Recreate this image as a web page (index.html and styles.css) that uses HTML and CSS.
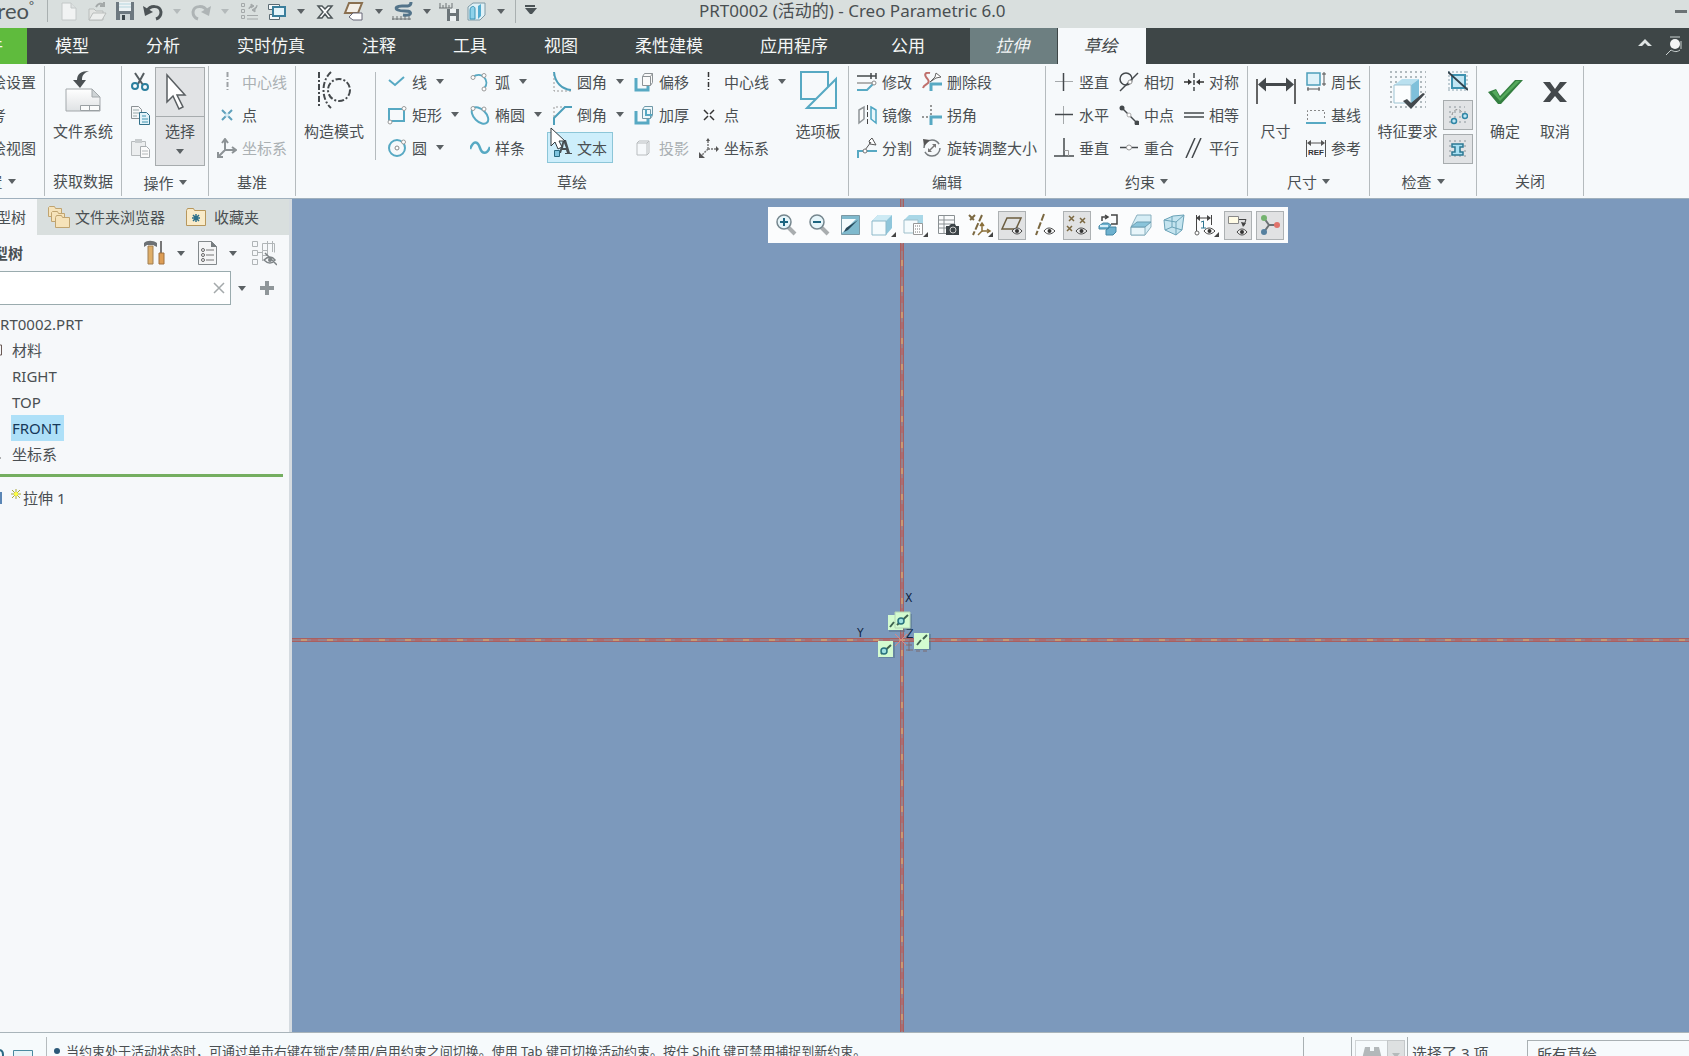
FILE: index.html
```html
<!DOCTYPE html>
<html lang="zh-CN">
<head>
<meta charset="utf-8">
<title>PRT0002 (活动的) - Creo Parametric 6.0</title>
<link rel="stylesheet" href="styles.css">
</head>
<body>
<div class="app">

<header class="titlebar">
  <div class="logo"><span>creo</span><sup>°</sup></div>
  <div class="quick">
    <button class="qi" aria-label="新建"><svg width="20" height="20" viewBox="0 0 20 20"><path d="M3 2h9l5 5v12H3z" fill="#f1f3f3" stroke="#c3c8c8"/><path d="M12 2v5h5" fill="#dde1e1" stroke="#c3c8c8"/></svg></button>
    <button class="qi" aria-label="打开"><svg width="20" height="20" viewBox="0 0 20 20"><path d="M2 8h5l2 2h7v9H2z" fill="#e2e4e2" stroke="#b9bdbc"/><path d="M2 19l4-7h13l-4 7z" fill="#eceeed" stroke="#b9bdbc"/><path d="M9 6c2-4 5-4 8-2M17 1v4h-4" fill="none" stroke="#a4a9a9" stroke-width="2"/></svg></button>
    <button class="qi" aria-label="保存"><svg width="20" height="20" viewBox="0 0 20 20"><path d="M1 1h18v18H1z" fill="#6d7880"/><path d="M4 1h12v9H4z" fill="#eef3f5"/><path d="M4 3h12M4 6h12" stroke="#b5d5de"/><path d="M5 13h10v6H5z" fill="#cdd4d6"/><path d="M7 14h3v5H7z" fill="#3c464b"/></svg></button>
    <button class="qi wide" aria-label="撤消"><svg width="20" height="20" viewBox="0 0 20 20"><path d="M4 10c3-6 13-6 14 1 0 3-2 6-5 7" fill="none" stroke="#4c5356" stroke-width="3"/><path d="M0 5l2 10 8-4z" fill="#4c5356"/></svg><i class="caret dim"></i></button>
    <button class="qi wide" aria-label="重做"><svg width="20" height="20" viewBox="0 0 20 20"><path d="M16 10C13 4 3 4 2 11c0 3 2 6 5 7" fill="none" stroke="#aeb4b5" stroke-width="3"/><path d="M20 5l-2 10-8-4z" fill="#aeb4b5"/></svg><i class="caret dim"></i></button>
    <button class="qi" aria-label="重新生成"><svg width="20" height="20" viewBox="0 0 20 20"><g fill="none" stroke="#a4a9aa"><path d="M2.500 2.500h3v3h-3zM2.500 8.500h3v3h-3zM2.500 14.500h3v3h-3z"/><path d="M8 14.500h11M8 18h11"/></g><path d="M10 8c0-2 1-3 4-3M12 3l3 2-3 2zM18 4c0 3-1 4-4 5M16 7l-3 2 3 2z" fill="#a4a9aa" stroke="#a4a9aa"/></svg></button>
    <button class="qi wide" aria-label="窗口"><svg width="20" height="20" viewBox="0 0 20 20"><path d="M1.500 3.500h11v5h-11z" fill="#f5f8f9" stroke="#5a6a72"/><path d="M2.500 13.500h10v5h-10z" fill="#f5f8f9" stroke="#5a6a72"/><path d="M6 6h12v9H6z" fill="#e4f4fa" stroke="#3b7f9c" stroke-width="2"/></svg><i class="caret"></i></button>
    <button class="qi" aria-label="关闭窗口"><svg width="20" height="20" viewBox="0 0 20 20"><path d="M3 5h4l3 3 3-3h4l-5 6 5 6h-4l-3-4-3 4H3l5-6z" fill="#fff" stroke="#4e5759" stroke-width="1.500"/></svg></button>
    <button class="qi wide" aria-label="基准平面"><svg width="22" height="20" viewBox="0 0 22 20"><path d="M6 2h13l-4 10H2z" fill="#f3efe8" stroke="#8a7050" stroke-width="2"/><path d="M10 12h9v7h-9l-4-3z" fill="#fff" stroke="#667"/></svg><i class="caret"></i></button>
    <button class="qi wide" aria-label="草绘"><svg width="22" height="20" viewBox="0 0 22 20"><path d="M20 1c0 5-4 4-9 4s-8 2-4 4 10 0 12 2-2 4-7 3" fill="none" stroke="#53748a" stroke-width="3"/><path d="M1 18h19M2 15v4M6 15v4M10 15v4M14 15v4M18 15v4" stroke="#6c7375"/></svg><i class="caret"></i></button>
    <button class="qi" aria-label="测量"><svg width="20" height="20" viewBox="0 0 20 20"><path d="M0 7h13M1 2v5M4 4v3M7 2v5M10 4v3M13 2v5" stroke="#6c7375"/><path d="M8 8h12v12H8z" fill="#6b7478"/><path d="M11 8h6v4h-6zM11 15h6v5h-6z" fill="#eef2f3"/></svg></button>
    <button class="qi wide" aria-label="截面"><svg width="20" height="20" viewBox="0 0 20 20"><path d="M1 6l5-4h12v12l-5 5H1z" fill="#dff1f7" stroke="#7f9aa6"/><path d="M3 18V9c0-4 5-5 5-1v10z" fill="#8ed2ea" stroke="#3b93b5"/><path d="M11 5l3-2v12l-3 3z" fill="#52acd0"/></svg><i class="caret"></i></button>
    <span class="vr"></span>
    <button class="qi bar" aria-label="自定义快速访问工具栏"><i class="caret big"></i></button>
  </div>
  <h1 class="title">PRT0002 (活动的) - Creo Parametric 6.0</h1>
  <button class="min" aria-label="最小化"></button>
</header>

<nav class="tabs">
  <button class="file"><span>文件</span></button>
  <button class="tab">模型</button><button class="tab">分析</button><button class="tab">实时仿真</button><button class="tab">注释</button><button class="tab">工具</button><button class="tab">视图</button><button class="tab">柔性建模</button><button class="tab">应用程序</button><button class="tab last">公用</button>
  <button class="ctx">拉伸</button><button class="ctx on">草绘</button>
  <div class="tabtools">
    <button aria-label="折叠功能区"><svg width="16" height="16" viewBox="0 0 16 16"><path d="M1 8l7-7 7 7h-4L8 5 5 8z" fill="#dfe4e4"/></svg></button>
    <button aria-label="搜索"><svg width="18" height="20" viewBox="0 0 18 20"><circle cx="10" cy="8" r="5" fill="#f3f5f5"/><path d="M5 1h10M16 5v8M15 14c-4 3-7 1-9 0l-5 5" fill="none" stroke="#c9d0d0"/></svg></button>
  </div>
</nav>

<section class="ribbon">
  <div class="group g-set">
    <div class="body"><div class="col cut">
      <button class="cmd">草绘设置</button><button class="cmd">参考</button><button class="cmd">草绘视图</button></div></div>
    <div class="label">设置<i class="caret"></i></div>
  </div>

  <div class="group g-data">
    <div class="body">
      <button class="big"><svg width="40" height="46" viewBox="0 0 40 46"><defs><linearGradient id="gy" x2="0" y2="1"><stop stop-color="#fff"/><stop offset="1" stop-color="#dfe2e4"/></linearGradient></defs><path d="M3 22h26l8 8v14H3z" fill="url(#gy)" stroke="#a3a8ab"/><path d="M29 22v8h8z" fill="#cfd4d6" stroke="#a3a8ab"/><path d="M17.500 38.500h19v5h-19zM26.500 38.500v5" fill="#fafbfb" stroke="#9aa0a3"/><path d="M26 4c-8 0-12 3-12 9h-4l7 8 6-8h-4c0-5 2-7 7-9z" fill="#4b5154"/></svg><span>文件系统</span></button>
    </div>
    <div class="label">获取数据</div>
  </div>

  <div class="group g-ops">
    <div class="body">
      <div class="col icons">
        <button class="cmd" aria-label="剪切"><svg width="20" height="20" viewBox="0 0 20 20"><path d="M5 1l8 12M14 1L8 12" stroke="#555d61" stroke-width="2" fill="none"/><ellipse cx="5" cy="14" rx="3" ry="3" fill="none" stroke="#2b7f9e" stroke-width="2"/><ellipse cx="15" cy="15" rx="3" ry="3" fill="none" stroke="#2b7f9e" stroke-width="2"/></svg></button>
        <button class="cmd" aria-label="复制"><svg width="20" height="20" viewBox="0 0 20 20"><path d="M1.500 1.500h7l3 3v9h-10z" fill="#f6f7f8" stroke="#8b9194"/><path d="M3 5h6M3 8h6M3 11h4" stroke="#9aa"/><path d="M9.500 7.500h7l3 3v9h-10z" fill="#e3f3f9" stroke="#33718a"/><path d="M12 11h4M12 14h6M12 17h6" stroke="#3f93b0"/></svg></button>
        <button class="cmd" aria-label="粘贴"><svg width="20" height="20" viewBox="0 0 20 20"><path d="M1.500 3.500h14v14h-14z" fill="#eceeef" stroke="#b7bbbd"/><path d="M5 1h7v4H5z" fill="#c8ccce"/><path d="M10.500 8.500h6l3 3v8h-9z" fill="#fbfbfb" stroke="#a8adb0"/><path d="M12 13h6M12 16h6" stroke="#b3b8ba"/></svg></button>
      </div>
      <button class="select"><span class="pick"><svg width="24" height="38" viewBox="0 0 24 38"><path d="M3 2v27l6-6 6 13 4-2-6-12h8z" fill="#fff" stroke="#5a5f62" stroke-width="1.500"/></svg></span><span class="pickname">选择</span><i class="caret"></i></button>
    </div>
    <div class="label">操作<i class="caret"></i></div>
  </div>

  <div class="group g-datum">
    <div class="body"><div class="col">
      <button class="cmd off"><svg width="20" height="20" viewBox="0 0 20 20"><path d="M10.500 0v20" stroke="#9da2a5" stroke-width="2" stroke-dasharray="5 2 1 2"/></svg>中心线</button>
      <button class="cmd"><svg width="20" height="20" viewBox="0 0 20 20"><path d="M5 5l10 10M15 5L5 15" stroke="#5fa0bb" stroke-width="2"/><circle cx="10" cy="10" r="2" fill="#d6ecf5"/></svg>点</button>
      <button class="cmd off"><svg width="20" height="20" viewBox="0 0 20 20"><path d="M8 12V2M8 12h10M8 12l-6 6M5 5l3-4 3 4M15 9l4 3-4 3M1 14v5h5" fill="none" stroke="#8d9396" stroke-width="2"/></svg>坐标系</button>
    </div></div>
    <div class="label">基准</div>
  </div>

  <div class="group g-sketch">
    <div class="body">
      <button class="big"><svg width="40" height="46" viewBox="0 0 40 46"><g fill="none" stroke="#44494c" stroke-width="2" stroke-dasharray="6 2 2 2"><path d="M5 5v36"/><path d="M17 5c-10 9-10 27 0 36"/><circle cx="25" cy="23" r="11"/></g></svg><span>构造模式</span></button>
      <span class="inner"></span>
      <div class="col c83">
        <button class="cmd"><svg width="20" height="20" viewBox="0 0 20 20"><path d="M2 8l6 5 9-8" fill="none" stroke="#57a9c3" stroke-width="2"/></svg>线<i class="caret"></i></button>
        <button class="cmd"><svg width="20" height="20" viewBox="0 0 20 20"><path d="M2 4h15v12H2z" fill="none" stroke="#57a9c3" stroke-width="2"/><circle cx="17" cy="3.500" r="2" fill="#fff" stroke="#999"/><circle cx="3" cy="17" r="2" fill="#fff" stroke="#999"/></svg>矩形<i class="caret"></i></button>
        <button class="cmd"><svg width="20" height="20" viewBox="0 0 20 20"><circle cx="10" cy="10" r="8" fill="none" stroke="#57a9c3" stroke-width="2"/><circle cx="10" cy="10" r="2" fill="#fff" stroke="#888"/><circle cx="16.500" cy="4" r="2" fill="#fff" stroke="#999"/></svg>圆<i class="caret"></i></button>
      </div>
      <div class="col c82">
        <button class="cmd"><svg width="20" height="20" viewBox="0 0 20 20"><path d="M3 5c8-6 18 3 11 12" fill="none" stroke="#57a9c3" stroke-width="2"/><circle cx="3" cy="5.500" r="2" fill="#fff" stroke="#999"/><circle cx="14" cy="3.500" r="2" fill="#fff" stroke="#999"/><circle cx="14" cy="17" r="2" fill="#fff" stroke="#999"/></svg>弧<i class="caret"></i></button>
        <button class="cmd"><svg width="20" height="20" viewBox="0 0 20 20"><ellipse cx="10" cy="10.500" rx="10" ry="6" transform="rotate(45 10 10.500)" fill="none" stroke="#57a9c3" stroke-width="2"/><circle cx="3" cy="3.500" r="2" fill="#fff" stroke="#999"/><circle cx="14" cy="4" r="2" fill="#fff" stroke="#999"/></svg>椭圆<i class="caret"></i></button>
        <button class="cmd"><svg width="20" height="20" viewBox="0 0 20 20"><path d="M0 11C4 1 8 4 10 10s7 7 10-1" fill="none" stroke="#57a9c3" stroke-width="2.500"/></svg>样条</button>
      </div>
      <div class="col c82">
        <button class="cmd"><svg width="20" height="20" viewBox="0 0 20 20"><path d="M2 2v17h17" fill="none" stroke="#999" stroke-dasharray="2 2"/><path d="M2 0c1 11 8 17 17 18" fill="none" stroke="#4d9fba" stroke-width="2"/></svg>圆角<i class="caret"></i></button>
        <button class="cmd"><svg width="20" height="20" viewBox="0 0 20 20"><path d="M2 12V2h12" fill="none" stroke="#999" stroke-dasharray="2 2"/><path d="M2 20v-7L13 2h7" fill="none" stroke="#4d9fba" stroke-width="2"/></svg>倒角<i class="caret"></i></button>
        <button class="cmd hot"><svg width="20" height="20" viewBox="0 0 20 20"><path d="M11 2h3l4 13h2v1h-7v-1h2l-1-3h-4l-1 3H7zM11 10h3l-2-5z" fill="#4a5054"/><path d="M2.500 12.500h5v6h-5z" fill="#7ec4df" stroke="#27697f"/></svg>文本<svg class="pointer" width="16" height="24" viewBox="0 0 16 24"><path d="M1 1v18l4-4 3 7 4-2-3-6h6z" fill="#fff" stroke="#333a3f"/></svg></button>
      </div>
      <div class="col c65">
        <button class="cmd"><svg width="20" height="20" viewBox="0 0 20 20"><path d="M2 6v12h12v-4" fill="none" stroke="#57a9c3" stroke-width="3"/><path d="M8.500 4.500h8v9h-8zM8.500 4.500l2-3h8v9l-2 3M16.500 4.500l2-3" fill="#fafafa" stroke="#8d9396"/></svg>偏移</button>
        <button class="cmd"><svg width="20" height="20" viewBox="0 0 20 20"><path d="M2 6v12h12v-4" fill="none" stroke="#57a9c3" stroke-width="3"/><path d="M8.500 4.500h8v9h-8zM8.500 4.500l2-3h8v9l-2 3" fill="#eef8fb" stroke="#6f99a8"/><path d="M12 4v6h6" fill="none" stroke="#57a9c3" stroke-width="2"/></svg>加厚</button>
        <button class="cmd off"><svg width="20" height="20" viewBox="0 0 20 20"><path d="M3 5h10v12H3zM3 5l2-2h10v12l-2 2M13 5l2-2" fill="none" stroke="#b9bdbf"/></svg>投影</button>
      </div>
      <div class="col c92">
        <button class="cmd"><svg width="20" height="20" viewBox="0 0 20 20"><path d="M9.500 0v20" stroke="#333" stroke-width="1.500" stroke-dasharray="5 2 1 2"/></svg>中心线<i class="caret"></i></button>
        <button class="cmd"><svg width="20" height="20" viewBox="0 0 20 20"><path d="M5 5l4 4M15 5l-4 4M5 15l4-4M15 15l-4-4" stroke="#333" stroke-width="1.500"/></svg>点</button>
        <button class="cmd"><svg width="20" height="20" viewBox="0 0 20 20"><path d="M9 11V3M9 11h8M9 11l-6 6" fill="none" stroke="#777" stroke-width="1.500" stroke-dasharray="2 1"/><path d="M7 3l2-3 2 3zM17 8l3 3-3 3zM0 14v6h6z" fill="#555"/></svg>坐标系</button>
      </div>
      <button class="big palette"><svg width="40" height="46" viewBox="0 0 40 46"><path d="M3 5h27v27H3z" fill="none" stroke="#57a9c3" stroke-width="2"/><path d="M9 41L38 12v29z" fill="#f8fafb" stroke="#57a9c3" stroke-width="2"/></svg><span>选项板</span></button>
    </div>
    <div class="label">草绘</div>
  </div>

  <div class="group g-edit">
    <div class="body">
      <div class="col c65">
        <button class="cmd"><svg width="20" height="20" viewBox="0 0 20 20"><path d="M0 4h19M14 1v6M19 1v6" stroke="#44494c" stroke-width="1.500"/><path d="M0 11h17" stroke="#999" stroke-width="1.500"/><path d="M0 18h10l6-6" fill="none" stroke="#57a9c3" stroke-width="2"/><circle cx="17" cy="11" r="2" fill="#fff" stroke="#888"/></svg>修改</button>
        <button class="cmd"><svg width="20" height="20" viewBox="0 0 20 20"><path d="M2 5l5-3v12l-5 4z" fill="#fafafa" stroke="#8d9396" stroke-width="1.500"/><path d="M10.500 0v20" stroke="#444" stroke-dasharray="5 2"/><path d="M14 2l5 3v13l-5-4z" fill="#e8f6fb" stroke="#4da5c2" stroke-width="1.500"/></svg>镜像</button>
        <button class="cmd"><svg width="20" height="20" viewBox="0 0 20 20"><path d="M1 20v-7h19" fill="none" stroke="#57a9c3" stroke-width="2"/><path d="M8 12l6-8M12 3l3-3 4 7-6-1z" fill="#fff" stroke="#555"/><circle cx="8" cy="13" r="2" fill="#fff" stroke="#777"/></svg>分割</button>
      </div>
      <div class="col">
        <button class="cmd"><svg width="20" height="20" viewBox="0 0 20 20"><path d="M8 1C4 0 2 2 4 5s4 4 2 6-4 2-5 5" fill="none" stroke="#c0706c" stroke-width="2"/><path d="M9 19v-7h11" fill="none" stroke="#57a9c3" stroke-width="3"/><path d="M8 10l5-5 1-4 5 4-5 1z" fill="#fff" stroke="#666"/></svg>删除段</button>
        <button class="cmd"><svg width="20" height="20" viewBox="0 0 20 20"><path d="M9 0v10M0 12h9" stroke="#777" stroke-width="1.500" stroke-dasharray="2 2"/><path d="M9 20v-8h11" fill="none" stroke="#57a9c3" stroke-width="3"/></svg>拐角</button>
        <button class="cmd"><svg width="20" height="20" viewBox="0 0 20 20"><circle cx="10" cy="10" r="8" fill="none" stroke="#777c7f" stroke-width="1.500" stroke-dasharray="21 4"/><path d="M7 13l6-6" stroke="#777" stroke-width="1.500"/><path d="M10 6h4v4zM6 10v4h4z" fill="#777"/><path d="M1 1l7 1-6 6z" fill="#555"/></svg>旋转调整大小</button>
      </div>
    </div>
    <div class="label">编辑</div>
  </div>

  <div class="group g-con">
    <div class="body">
      <div class="col c65">
        <button class="cmd"><svg width="20" height="20" viewBox="0 0 20 20"><path d="M1 9.500h18" stroke="#a5a9ab"/><path d="M9.500 1v18" stroke="#44494c" stroke-width="1.500"/></svg>竖直</button>
        <button class="cmd"><svg width="20" height="20" viewBox="0 0 20 20"><path d="M9.500 1v18" stroke="#a5a9ab"/><path d="M1 9.500h18" stroke="#44494c" stroke-width="1.500"/></svg>水平</button>
        <button class="cmd"><svg width="20" height="20" viewBox="0 0 20 20"><path d="M10 0v18M0 18h20" stroke="#44494c" stroke-width="1.500"/><path d="M10 12.500h4.500V18" fill="none" stroke="#999"/></svg>垂直</button>
      </div>
      <div class="col c65">
        <button class="cmd"><svg width="20" height="20" viewBox="0 0 20 20"><circle cx="7" cy="7" r="6" fill="none" stroke="#44494c" stroke-width="1.500"/><path d="M1 19L19 1" stroke="#44494c" stroke-width="1.500"/><circle cx="11" cy="10" r="2" fill="#fff" stroke="#999"/></svg>相切</button>
        <button class="cmd"><svg width="20" height="20" viewBox="0 0 20 20"><path d="M2 2l16 16" stroke="#44494c" stroke-width="1.500"/><circle cx="3" cy="3" r="2.500" fill="#44494c"/><circle cx="18" cy="18" r="2.500" fill="#44494c"/><circle cx="10" cy="10" r="2" fill="#fff" stroke="#aaa"/></svg>中点</button>
        <button class="cmd"><svg width="20" height="20" viewBox="0 0 20 20"><path d="M1 9.500h18" stroke="#44494c" stroke-width="1.500"/><circle cx="10" cy="9.500" r="2.500" fill="#fff" stroke="#999"/></svg>重合</button>
      </div>
      <div class="col">
        <button class="cmd"><svg width="20" height="20" viewBox="0 0 20 20"><path d="M10 1v18" stroke="#44494c" stroke-width="1.500" stroke-dasharray="5 2"/><path d="M0 10h6M20 10h-6" stroke="#333" stroke-width="1.500"/><path d="M4 7l4 3-4 3zM16 7l-4 3 4 3z" fill="#333"/></svg>对称</button>
        <button class="cmd"><svg width="20" height="20" viewBox="0 0 20 20"><path d="M0 8h20M0 12h20" stroke="#44494c" stroke-width="1.500"/></svg>相等</button>
        <button class="cmd"><svg width="20" height="20" viewBox="0 0 20 20"><path d="M2 20L11 0M8 20L17 0" stroke="#44494c" stroke-width="1.500"/></svg>平行</button>
      </div>
    </div>
    <div class="label">约束<i class="caret"></i></div>
  </div>

  <div class="group g-dim">
    <div class="body">
      <button class="big"><svg width="40" height="46" viewBox="0 0 40 46"><path d="M1 12v25M39 12v25" stroke="#333" stroke-width="1.500"/><path d="M6 17.500h28" stroke="#44494c" stroke-width="3"/><path d="M2 17.500l8-7v14zM38 17.500l-8-7v14z" fill="#44494c"/></svg><span>尺寸</span></button>
      <div class="col">
        <button class="cmd"><svg width="20" height="20" viewBox="0 0 20 20"><path d="M1 1h13v12H1z" fill="#dff2f9" stroke="#4d9fba" stroke-width="1.500"/><path d="M18 0v14M16 2h4M16 12h4M1 17h13M2 15v4M13 15v4" stroke="#555"/></svg>周长</button>
        <button class="cmd"><svg width="20" height="20" viewBox="0 0 20 20"><path d="M1.500 15V5.500h17V15" fill="none" stroke="#888" stroke-dasharray="2 2"/><path d="M0 18h20" stroke="#57a9c3" stroke-width="2"/></svg>基线</button>
        <button class="cmd"><svg width="20" height="20" viewBox="0 0 20 20"><path d="M.5 2v17M19.500 2v17M2 5h16" stroke="#555"/><path d="M1 5l4-3v6zM19 5l-4-3v6z" fill="#555"/><text x="2" y="17" font-size="8" font-weight="700" font-family="Liberation Sans, sans-serif" fill="#333">REF</text></svg>参考</button>
      </div>
    </div>
    <div class="label">尺寸<i class="caret"></i></div>
  </div>

  <div class="group g-check">
    <div class="body">
      <button class="big"><svg width="40" height="46" viewBox="0 0 40 46"><g stroke="#9aa5ab" stroke-width="1.500" stroke-dasharray="2 3"><path d="M2 5h36M2 10h36M2 15h36M2 20h36M2 25h36M2 30h36M2 35h36M2 40h36"/></g><path d="M6 18l8-6h17v18l-8 8H6z" fill="#fbfdfe"/><path d="M6 18l8-6h17l-8 6z" fill="#b9e0ef"/><path d="M23 18l8-6v18l-8 8z" fill="#7fc0da"/><path d="M6 18h17v18H6z" fill="#fbfdfe" stroke="#9dc3d2"/><path d="M15 34l4-2 4 4L35 26l2 1-14 15z" fill="#43494d"/></svg><span>特征要求</span></button>
      <div class="col toggles">
        <button class="tog" aria-label="着色封闭环"><svg width="20" height="20" viewBox="0 0 20 20"><path d="M0 1h20M0 19h20M1 0v20M19 0v20" stroke="#8aa2ad" stroke-dasharray="2 2"/><path d="M4 4h13v13H4z" fill="#c2e6f3" stroke="#3f93b0" stroke-width="2"/><path d="M0 1l20 18" stroke="#33434d" stroke-width="2"/></svg></button>
        <button class="tog down" aria-label="突出显示开放端"><svg width="20" height="20" viewBox="0 0 20 20"><path d="M1 2h16M1 7h18M1 12h18M1 17h18" stroke="#a8b0b4" stroke-width="1.500" stroke-dasharray="2 3"/><path d="M4 10c1-6 8-8 11-1" fill="none" stroke="#888" stroke-dasharray="3 2"/><circle cx="6" cy="16" r="2.500" fill="#bfe6f5" stroke="#2f86a6" stroke-width="1.500"/><circle cx="17" cy="11" r="2.500" fill="#bfe6f5" stroke="#2f86a6" stroke-width="1.500"/></svg></button>
        <button class="tog down" aria-label="重叠几何"><svg width="20" height="20" viewBox="0 0 20 20"><path d="M1 2h18M1 7h18M1 12h18M1 17h18" stroke="#a8b0b4" stroke-width="1.500" stroke-dasharray="2 3"/><path d="M4 5h11v3h-3v5h3v3H4v-3h3V8H4z" fill="#a8e0f3" stroke="#2b7893" stroke-width="1.500"/></svg></button>
      </div>
    </div>
    <div class="label">检查<i class="caret"></i></div>
  </div>

  <div class="group g-close">
    <div class="body">
      <button class="big"><svg width="40" height="46" viewBox="0 0 40 46"><path d="M3 25l8-3 4 7L30 13h8L16 37h-3z" fill="#347f40"/><path d="M7 25l4-2 4 8L31 14h4L15 34z" fill="#55a95c"/></svg><span>确定</span></button>
      <button class="big"><svg width="40" height="46" viewBox="0 0 40 46"><path d="M8 15h7l5 7 5-7h7l-9 10 9 10h-7l-5-6-5 6H8l8-10z" fill="#44494c"/></svg><span>取消</span></button>
    </div>
    <div class="label">关闭</div>
  </div>
</section>

<main class="main">
  <aside class="side">
    <div class="sidetabs">
      <button class="st on"><span>模型树</span></button>
      <button class="st folders"><svg width="24" height="24" viewBox="0 0 24 24"><g fill="#f6e3ba" stroke="#c0a470"><path d="M1.500 2.500l1-1h5l1 2h6v8h-13z"/><path d="M4.500 7.500l1-1h5l1 2h6v8h-13z"/><path d="M8.500 12.500l1-2h5l1 2h7v10h-14z"/></g></svg>文件夹浏览器</button>
      <button class="st fav"><svg width="22" height="22" viewBox="0 0 22 22"><path d="M1.500 4.500l1-2h6l1 2h11v15h-19z" fill="#f9ebc9" stroke="#b7975c"/><path d="M11 8v8M7 12h8M8 9l6 6M14 9l-6 6" stroke="#2b6f8a" stroke-width="1.500"/></svg>收藏夹</button>
    </div>
    <div class="treehead">
      <h2>模型树</h2>
      <button class="th" aria-label="设置"><svg width="24" height="26" viewBox="0 0 24 26"><path d="M1 7V3c3-3 9-3 13 0v4l-4-2H4z" fill="#6d7175"/><path d="M5 6h5v18H5z" fill="#dfae68" stroke="#a07f52"/><path d="M18 1v12" stroke="#777" stroke-width="2"/><path d="M16 13h5v11h-5z" fill="#dd9d55" stroke="#a0703f"/></svg><i class="caret"></i></button>
      <button class="th" aria-label="显示"><svg width="22" height="26" viewBox="0 0 22 26"><path d="M1.500 1.500h13l5 5v18h-18z" fill="#f4f5f6" stroke="#83898c"/><path d="M14 1v6h6z" fill="#777d80"/><path d="M9 10h8M9 15h8M9 20h8" stroke="#777"/><circle cx="6" cy="10" r="1.500" fill="none" stroke="#666"/><circle cx="6" cy="15" r="1.500" fill="none" stroke="#666"/><circle cx="6" cy="20" r="1.500" fill="none" stroke="#666"/></svg><i class="caret"></i></button>
      <button class="th" aria-label="隐藏的项"><svg width="28" height="26" viewBox="0 0 28 26"><g fill="none" stroke="#b0b5b7"><path d="M3.500 1.500h5v5h-5zM3.500 10.500h5v5h-5zM3.500 19.500h5v5h-5zM13.500 10.500h5v5h-5zM8 12.500h5M18.500 12V1M23.500 12V1M13.500 10V3.500h12v9M13.500 15v6"/></g><path d="M15 20c4-4 8-4 11 0-3 4-7 4-11 0zM16 13l12 12" fill="none" stroke="#7d8386" stroke-width="1.500"/><circle cx="21" cy="20" r="2" fill="#7d8386"/></svg></button>
    </div>
    <div class="find">
      <label><input type="text" aria-label="查找"><button aria-label="清除"><svg width="12" height="12" viewBox="0 0 12 12"><path d="M1 1l10 10M11 1L1 11" stroke="#a4a9ab" stroke-width="1.500"/></svg></button></label>
      <button aria-label="过滤选项"><i class="caret"></i></button>
      <button aria-label="添加"><svg width="14" height="14" viewBox="0 0 14 14"><path d="M7 0v14M0 7h14" stroke="#8f9699" stroke-width="4"/></svg></button>
    </div>
    <ul class="tree">
      <li class="root"><span>PRT0002.PRT</span></li>
      <li><svg width="2" height="12"><path d="M0 1h1.500v10H0" fill="none" stroke="#6b5a55"/></svg><span>材料</span></li>
      <li><span>RIGHT</span></li>
      <li><span>TOP</span></li>
      <li class="sel"><span>FRONT</span></li>
      <li><svg width="2" height="12"><path d="M0 10h1" stroke="#666"/></svg><span>坐标系</span></li>
    </ul>
    <hr class="insert">
    <ul class="tree"><li class="feat"><svg width="2" height="12"><path d="M1 0v12" stroke="#5b86b5" stroke-width="2"/></svg><svg class="spark" width="10" height="12" viewBox="0 0 10 12"><path d="M5 1v10M0 6h10M1 2l8 8M9 2l-8 8" stroke="#a9a83c"/><circle cx="5" cy="6" r="2" fill="#ffff3c"/></svg><span>拉伸 1</span></li></ul>
  </aside>

  <section class="canvas">
    <div class="axis v"></div>
    <div class="axis h"></div>
    <svg class="origin" width="100" height="100" viewBox="0 0 100 100">
      <g font-family="DejaVu Sans Condensed, DejaVu Sans, sans-serif" font-size="12" fill="#10233f"><text x="53" y="12">X</text><text x="5" y="47">Y</text><text x="54" y="48">Z</text></g>
      <path d="M43 44l12 12M55 44L43 56" stroke="#e0857e"/>
      <path d="M54 55h6M57 52v9M54 60h7M64 58h4M71 58h3M64 61h4M71 61h4" stroke="#7d6b6e"/>
      <path d="M37 26h16v16H37zM63 44h16v16H63zM27 52h16v16H27zM44 24h16v16H44z" fill="#4f6f86" opacity=".5"/>
      <path d="M36 25h15v15H36zM62 43h15v16H62zM26 51h15v16H26z" fill="#d3fbd0"/>
      <path d="M43 22h15v16H43z" fill="#d3fbd0" stroke="#b4d6b4"/>
      <path d="M38 37l4-5M65 55l4-5M71 49l4-4M29 64l10-9M45 35l11-10" stroke="#3f6350" stroke-width="2"/>
      <circle cx="49" cy="31" r="3" fill="#9fe0e0" stroke="#27707c" stroke-width="1.500"/><circle cx="32" cy="61" r="3" fill="#9fe0e0" stroke="#27707c" stroke-width="1.500"/>
    </svg>
    <div class="viewbar">
      <button aria-label="放大"><svg width="24" height="24" viewBox="0 0 24 24"><path d="M14 14l7 7" stroke="#a9adaf" stroke-width="4"/><circle cx="10" cy="9" r="7" fill="#e6f5fa" stroke="#75868e" stroke-width="1.500"/><path d="M10 5v8M6 9h8" stroke="#1d6580" stroke-width="2"/></svg></button>
      <button aria-label="缩小"><svg width="24" height="24" viewBox="0 0 24 24"><path d="M14 14l7 7" stroke="#a9adaf" stroke-width="4"/><circle cx="10" cy="9" r="7" fill="#e6f5fa" stroke="#75868e" stroke-width="1.500"/><path d="M6 9h8" stroke="#1d6580" stroke-width="2"/></svg></button>
      <button aria-label="重画"><svg width="24" height="24" viewBox="0 0 24 24"><path d="M2.500 2.500h18v19h-18z" fill="#7fb9cd" stroke="#7b98a4"/><path d="M3 6h14L3 20z" fill="#f4fbfd"/><path d="M19 7L9 17l-4 2 2-4z" fill="#27485a"/></svg></button>
      <button aria-label="显示样式"><svg width="26" height="24" viewBox="0 0 26 24"><path d="M2 8l6-6h14v13l-6 7H2z" fill="#8fc6db"/><path d="M2 8l6-6h14l-6 6z" fill="#cdeaf4"/><path d="M2 8h14v14H2z" fill="#f5fbfd" stroke="#8db9ca"/><path d="M26 19v5h-5z" fill="#444"/></svg></button>
      <button aria-label="已保存方向"><svg width="26" height="24" viewBox="0 0 26 24"><path d="M2 7l5-5h14v13l-5 5H2z" fill="#a9d7e7"/><path d="M2 7h14v13H2z" fill="#f5fbfd" stroke="#9fbfcb"/><path d="M11.500 10.500h9v11h-9z" fill="#fff" stroke="#999"/><path d="M13 13h6M13 16h6M13 19h6" stroke="#777" stroke-dasharray="1 1"/><path d="M26 19v5h-5z" fill="#444"/></svg></button>
      <button aria-label="视图管理器"><svg width="24" height="24" viewBox="0 0 24 24"><path d="M2.500 2.500h16v18h-16zM2 7h17M2 11h17M2 15h17M8 2v18" fill="none" stroke="#8a9093"/><path d="M10 13h3l2-2h4l1 2h3v9H10z" fill="#3d4448"/><circle cx="17" cy="17" r="3" fill="#3d4448" stroke="#ccc"/></svg></button>
      <button aria-label="基准显示过滤器"><svg width="26" height="24" viewBox="0 0 26 24"><path d="M2 2l6 6M8 2L2 8M15 2L6 22" stroke="#7b6841" stroke-width="2" fill="none" stroke-dasharray="7 2"/><path d="M15 18v-7M15 18h7M15 18l-4 4M13 13l2-3 2 3M20 16l3 2-3 2" stroke="#8a6f3a" fill="none" stroke-width="1.500"/><path d="M26 19v5h-5z" fill="#444"/></svg></button>
      <button class="down" aria-label="平面显示"><svg width="24" height="24" viewBox="0 0 24 24"><path d="M7 5h14l-5 11H2z" fill="none" stroke="#6c5d3f" stroke-width="1.500"/><path d="M12 18c3-4 7-4 10 0-3 4-7 4-10 0z" fill="#e8e8e8" stroke="#444"/><circle cx="17" cy="18" r="2" fill="#333"/></svg></button>
      <button aria-label="轴显示"><svg width="24" height="24" viewBox="0 0 24 24"><path d="M11 1L3 22" stroke="#7b6841" stroke-width="2" stroke-dasharray="7 2"/><path d="M11 18c3-4 7-4 11 0-4 4-8 4-11 0z" fill="#fff" stroke="#444"/><circle cx="16.500" cy="18" r="2" fill="#333"/></svg></button>
      <button class="down" aria-label="点显示"><svg width="24" height="24" viewBox="0 0 24 24"><path d="M4 3l5 5M9 3L4 8M15 5l5 5M20 5l-5 5M2 13l5 5M7 13l-5 5" stroke="#7b6841" stroke-width="1.500"/><path d="M11 18c3-4 7-4 11 0-4 4-8 4-11 0z" fill="#e8e8e8" stroke="#444"/><circle cx="16.500" cy="18" r="2" fill="#333"/></svg></button>
      <button aria-label="草绘视图"><svg width="24" height="24" viewBox="0 0 24 24"><path d="M5 8V4h5M8 2l3 2-3 2M14 2h6v9h-6" fill="none" stroke="#444" stroke-width="1.500"/><path d="M2 13l4-3h5l3 2-3 4H2zM9 17l3-3h7v5l-3 3H9z" fill="#6db1cf" stroke="#4688a5"/><path d="M3 13h8" stroke="#d6eef8" stroke-width="2"/></svg></button>
      <button aria-label="修剪模型"><svg width="24" height="24" viewBox="0 0 24 24"><path d="M2 14l6-12h14v12l-6 8H2z" fill="#d6edf5" stroke="#8ab0bf"/><path d="M2 14h14v8H2z" fill="#e8f5fa" stroke="#8ab0bf"/><path d="M2 14l6-5h14l-6 5z" fill="#8ac4da" stroke="#6a9db2"/></svg></button>
      <button aria-label="透视图"><svg width="24" height="24" viewBox="0 0 24 24"><path d="M2 7l9-4 11-1-2 15-6 5-11-5z" fill="#c4e4ef" stroke="#6ba3b8"/><path d="M2 7l12 2 8-7M14 9v13M10 3v11l10 3M10 14l-7 3" fill="none" stroke="#6ba3b8"/></svg></button>
      <button aria-label="尺寸显示"><svg width="26" height="24" viewBox="0 0 26 24"><path d="M3.500 2v16M18.500 2v10M4 5h13" stroke="#444" fill="none"/><path d="M10.500 8v7M8 15h5M8 9l3-1" stroke="#2d7590" fill="none"/><path d="M3 5l4-3v6zM18 5l-4-3v6z" fill="#444"/><circle cx="4" cy="20" r="2" fill="#fff" stroke="#666"/><path d="M11 18c3-4 7-4 11 0-4 4-8 4-11 0z" fill="#fff" stroke="#444"/><circle cx="16.500" cy="18" r="2" fill="#333"/><path d="M26 19v5h-5z" fill="#444"/></svg></button>
      <button class="down" aria-label="注释显示"><svg width="24" height="24" viewBox="0 0 24 24"><path d="M2.500 3.500h10v7h-10z" fill="#fffbe5" stroke="#888"/><path d="M13 6.500h7l-2 6" fill="none" stroke="#444"/><path d="M15 9l2 5 3-4z" fill="#444"/><path d="M11 19c3-4 7-4 10 0-3 4-7 4-10 0z" fill="#e8e8e8" stroke="#444"/><circle cx="16" cy="19" r="2" fill="#333"/></svg></button>
      <button class="down" aria-label="旋转中心"><svg width="24" height="24" viewBox="0 0 24 24"><path d="M6 5l5 7h9M11 12l-5 7" fill="none" stroke="#6b7174" stroke-width="2"/><circle cx="6" cy="5" r="3" fill="#74b36f"/><circle cx="19" cy="12" r="3" fill="#e0736b"/><circle cx="6" cy="19" r="3" fill="#55809f"/></svg></button>
    </div>
  </section>
</main>

<footer class="status">
  <button class="sb" aria-label="导航器"><svg width="36" height="20" viewBox="0 0 36 20"><path d="M0 3c4 1 4 8 0 11" fill="none" stroke="#2d6b86" stroke-width="2"/><path d="M13.500 3.500h19v15h-19z" fill="#e8f4f8" stroke="#4b8aa0"/></svg></button>
  <p class="msg">当约束处于活动状态时，可通过单击右键在锁定/禁用/启用约束之间切换。使用 Tab 键可切换活动约束。按住 Shift 键可禁用捕捉到新约束。</p>
  <span class="cell"></span>
  <div class="cell search"><button class="bino" aria-label="查找"><svg width="20" height="20" viewBox="0 0 20 20"><path d="M3 2h5v4h4V2h5l3 12v4h-8v-5H8v5H0v-4z" fill="#b3b8ba"/></svg></button><button class="binodrop" aria-label="查找选项"><i class="caret dim"></i></button></div>
  <output>选择了 3 项</output>
  <select aria-label="选择过滤器"><option>所有草绘</option></select>
</footer>
</div>
</body>
</html>
```
FILE: styles.css
```css
* { box-sizing: border-box; }
body {
  margin: 0;
  font: 15px/20px "Noto Sans", "Noto Sans CJK SC", sans-serif;
  color: #4a4f52;
  background: #f6f9fb;
  overflow: hidden;
}
button {
  font: inherit;
  color: inherit;
  background: none;
  border: 0;
  padding: 0;
  margin: 0;
  display: flex;
  align-items: center;
  white-space: nowrap;
}
svg { flex: none; display: block; }
h1, h2, p, ul { margin: 0; padding: 0; }

.app {
  height: 100vh;
  display: grid;
  grid-template-rows: 28px 36px 135px minmax(0, 1fr) 24px;
}
.caret {
  flex: none;
  border: 4px solid transparent;
  border-top: 5px solid #5b6164;
  border-bottom: 0;
}
.caret.dim { border-top-color: #b4babb; }

/* title bar */
.titlebar {
  display: flex;
  align-items: center;
  height: 28px;
  padding-bottom: 6px;
  background: #d9dfde;
}
.logo {
  width: 48px;
  height: 22px;
  display: flex;
  justify-content: flex-end;
  padding-right: 13px;
  overflow: hidden;
  border-right: 1px solid #a9b0b0;
  font: 22px/22px Lato, sans-serif;
  color: #4b5356;
  margin-right: 11px;
}
.logo sup { font-size: 12px; line-height: 12px; }
.quick { display: flex; align-items: center; }
.qi { width: 28px; gap: 10px; }
.qi.wide { width: 48px; }
.vr { width: 1px; height: 24px; background: #a9b0b0; margin-right: 9px; }
.qi.bar { width: 12px; }
.caret.big { border-width: 6px 5px 0; border-top-color: #4b5356; position: relative; }
.caret.big::before {
  content: "";
  position: absolute;
  left: -5px;
  top: -9px;
  width: 10px;
  border-top: 2px solid #4b5356;
}
.title {
  margin-left: 162px;
  font-size: 17px;
  font-weight: 400;
  white-space: nowrap;
}
.min { margin-left: auto; margin-right: 2px; width: 12px; height: 3px; background: #6b7274; }

/* ribbon tabs */
.tabs {
  display: flex;
  background: #3e4647;
  color: #f4f6f6;
  font-size: 17px;
}
.tabs > button { justify-content: center; }
.tabs .file {
  width: 27px;
  background: #5fbb3d;
  justify-content: flex-end;
  padding-right: 24px;
}
.tab { padding: 0 29px 0 28px; }
.tab.last { padding: 0 45px 0 34px; }
.tabs .ctx { width: 88px; padding-right: 3px; background: #6d7f81; font-style: italic; border-right: 1px solid #3e4647; }
.tabs .ctx.on { background: #f6f9fb; color: #3d4244; border: 0; }
.tabtools { margin-left: auto; display: flex; gap: 12px; padding-right: 6px; align-items: center; }

/* ribbon */
.ribbon {
  display: flex;
  background: #f6f9fb;
  border-bottom: 1px solid #9fb0bd;
  padding: 2px 0 2px;
}
.group {
  flex: none;
  border-right: 1px solid #b5bbbe;
  display: flex;
  flex-direction: column;
  overflow: hidden;
}
.body { display: flex; height: 100px; padding-top: 1px; }
.label {
  height: 30px;
  display: flex;
  align-items: center;
  justify-content: center;
  gap: 5px;
  margin-top: 3px;
}
.g-set { width: 45px; }
.g-set .label { width: 60px; margin-left: -36px; }
.g-data { width: 77px; }
.g-ops { width: 87px; }
.g-datum { width: 87px; }
.g-sketch { width: 553px; }
.g-edit { width: 197px; }
.g-con { width: 202px; }
.g-dim { width: 122px; }
.g-check { width: 107px; }
.g-close { width: 107px; }

.col { display: flex; flex-direction: column; margin-top: -2px; }
.col.cut { margin-left: -24px; }
.cmd { height: 33px; gap: 5px; position: relative; }
.cmd .caret { margin-left: 4px; }
.cmd.off { color: #aab0b3; }
.c83 { width: 83px; }
.c82 { width: 82px; }
.c65 { width: 65px; }
.c92 { width: 92px; }
.g-datum .body, .g-con .body, .g-edit .body { padding-left: 8px; }
.g-ops .body { padding-left: 8px; gap: 5px; }
.cmd.hot {
  height: 31px;
  width: 66px;
  margin: 1px 0 0 -5px;
  padding-left: 4px;
  background: #cdeefb;
  border: 1px solid #8cc6d8;
}
.pointer { position: absolute; left: 2px; top: -6px; }
.big {
  flex: 1;
  flex-direction: column;
  line-height: 20px;
  gap: 8px;
}
.select {
  width: 50px;
  flex-direction: column;
  background: #e1e3e5;
  border: 1px solid #a7acae;
  height: 99px;
}
.pick {
  width: 100%;
  height: 49px;
  display: flex;
  justify-content: center;
  align-items: center;
  border-bottom: 1px solid #a7acae;
  padding-right: 8px;
}
.pickname { margin: 4px 0 8px; }
.g-sketch .big { flex: none; width: 76px; }
.g-sketch .inner { width: 1px; height: 88px; background: #b5bbbe; margin: 5px 11px 0 3px; }
.g-sketch .palette { width: 54px; }
.g-dim .big { width: 55px; flex: none; margin-right: 3px; }
.g-check .big { width: 75px; flex: none; }
.toggles { gap: 4px; margin-top: -1px; }
.tog { width: 30px; height: 30px; margin-left: -2px; justify-content: center; }
.tog.down { background: #e1e3e5; border: 1px solid #a7acae; }
.g-close .body { padding: 1px 3px 0; }

/* model tree panel */
.main { display: flex; min-height: 0; }
.side { flex: none; width: 292px; border-right: 3px solid #d5dbe0; background: #f6f8fa; overflow: hidden; }
.sidetabs { display: flex; height: 36px; background: #d9dfde; }
.st.on { width: 37px; background: #f6f8fa; justify-content: flex-end; padding-right: 11px; }
.folders { margin-left: 10px; gap: 4px; }
.fav { margin-left: 20px; gap: 7px; }
.treehead { display: flex; align-items: center; height: 36px; }
.treehead h2 { font-size: 15px; line-height: 20px; font-weight: 700; width: 143px; margin-left: -22px; margin-right: 22px; }
.th { gap: 10px; margin-right: 12px; }
.find { display: flex; align-items: center; }
.find label {
  display: flex;
  align-items: center;
  width: 231px;
  height: 34px;
  background: #fff;
  border: 1px solid #9aabae;
  border-left: 0;
  padding-right: 5px;
}
.find input { flex: 1; min-width: 0; border: 0; background: none; font: inherit; outline: 0; }
.find > button { margin-left: 7px; }
.find > button + button { margin-left: 14px; }
.tree { list-style: none; }
.tree li { height: 26px; display: flex; align-items: center; }
.find + .tree { padding-top: 6px; }
.tree li span { padding: 0 3px 0 1px; line-height: 26px; margin-left: 11px; }
.tree svg + span { margin-left: 9px; }
.tree .root span { margin-left: -10px; }
.tree .sel span { background: #aee0f8; color: #16395a; }
.insert { border: 0; height: 3px; margin: 7px 6px 8px 0; background: #74ae60; }
.spark { margin: -8px 0 0 9px; }
.tree .spark + span { margin-left: 1px; }

/* graphics area */
.canvas { flex: 1; position: relative; background: #7c99bc; overflow: hidden; }
.axis { position: absolute; border: 0 solid #a85f60; }
.axis.v {
  left: 43.500%;
  top: 0;
  bottom: 0;
  width: 4px;
  border-width: 0 1px;
  background: repeating-linear-gradient(#9a8089 0 9px, #c59a76 9px 15px, #9a8089 15px 19px, #ab6d72 19px 26px);
}
.axis.h {
  top: 52.700%;
  left: 0;
  right: 0;
  height: 4px;
  border-width: 1px 0;
  background: repeating-linear-gradient(90deg, #9a8089 0 9px, #c59a76 9px 15px, #9a8089 15px 19px, #ab6d72 19px 26px);
}
.origin { position: absolute; left: calc(43.500% - 48px); top: calc(52.700% - 48px); }
.viewbar {
  position: absolute;
  left: 34.100%;
  top: 8px;
  width: 520px;
  height: 36px;
  padding: 0 4px;
  background: #fbfcfd;
  display: flex;
  align-items: center;
  justify-content: space-between;
}
.viewbar button { width: 28px; height: 29px; justify-content: center; }
.viewbar .down { background: #e1e2e3; border: 1px solid #adb1b3; }

/* status bar */
.status {
  display: flex;
  align-items: flex-start;
  height: 24px;
  overflow: hidden;
  border-top: 1px solid #a9b4ba;
  background: #f6fafc;
}
.status > * { flex: none; }
.sb { height: 40px; width: 47px; border-right: 1px solid #b5bbbe; margin-top: 4px; }
.status .msg {
  flex: 1;
  display: flex;
  align-items: center;
  height: 36px;
  font-size: 13px;
  white-space: nowrap;
}
.msg::before { content: ""; width: 6px; height: 6px; border-radius: 3px; background: #2b5878; margin: 0 6px 0 7px; }
.cell { height: 40px; margin-top: 4px; width: 48px; border-left: 1px solid #a9b0b3; }
.cell.search { width: 57px; padding: 3px 2px 0 3px; border-right: 1px solid #a9b0b3; display: flex; }
.bino { width: 33px; height: 30px; border: 1px solid #d0d4d6; border-right: 0; justify-content: center; }
.binodrop { width: 18px; height: 30px; background: #dde0e1; border: 1px solid #c4c8ca; justify-content: center; }
.status output { width: 119px; padding-left: 4px; line-height: 40px; }
.status select {
  width: 162px;
  height: 28px;
  margin-top: 7px;
  padding: 0 9px;
  appearance: none;
  font: inherit;
  color: inherit;
  background: #f6fafc;
  border: 1px solid #a9b0b3;
  border-right: 0;
  border-radius: 0;
}
```
